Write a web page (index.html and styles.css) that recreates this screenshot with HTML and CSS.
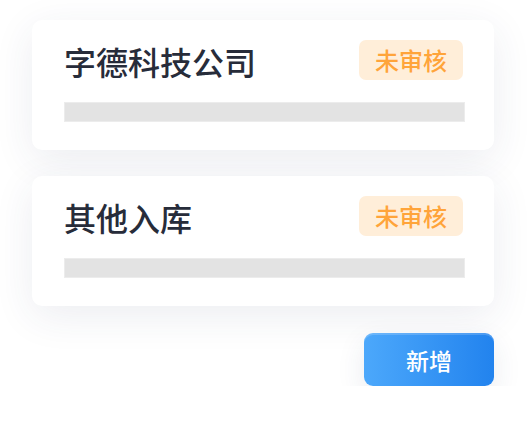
FILE: index.html
```html
<!DOCTYPE html>
<html lang="zh">
<head>
<meta charset="utf-8">
<title>列表</title>
<link rel="stylesheet" href="styles.css">
</head>
<body>
<div class="page">
  <div class="card">
    <div class="card-head">
      <div class="title">字德科技公司</div>
      <div class="badge">未审核</div>
    </div>
    <div class="bar"></div>
  </div>
  <div class="card">
    <div class="card-head">
      <div class="title">其他入库</div>
      <div class="badge">未审核</div>
    </div>
    <div class="bar"></div>
  </div>
  <div class="actions">
    <button class="btn">新增</button>
  </div>
</div>
</body>
</html>
```

FILE: styles.css
```css
html, body {
  margin: 0;
  padding: 0;
  background: #ffffff;
}
body {
  font-family: "Noto Sans CJK SC", "Noto Sans", sans-serif;
}
.page {
  padding: 20px 33px 0 32px;
  display: flex;
  flex-direction: column;
  gap: 26px;
}
.card {
  background: #ffffff;
  border-radius: 10px;
  box-shadow: 0 10px 40px rgba(40, 55, 95, 0.09);
  padding: 20px 30px 28px 32px;
  display: flex;
  flex-direction: column;
  gap: 22px;
}
.card-head {
  display: flex;
  align-items: center;
  justify-content: space-between;
  height: 40px;
}
.title {
  font-size: 32px;
  font-weight: 500;
  color: #272c3a;
  line-height: 40px;
  margin-top: 2px;
}
.badge {
  width: 104px;
  height: 40px;
  margin-right: 1px;
  border-radius: 7px;
  background: #ffeed9;
  color: #ffa43a;
  font-size: 24px;
  font-weight: 500;
  line-height: 40px;
  text-align: center;
}
.bar {
  height: 18px;
  background: #e3e3e3;
  border: 1px solid #ececec;
  margin-right: -1px;
}
.actions {
  display: flex;
  justify-content: flex-end;
  margin-top: 1px;
}
.btn {
  width: 130px;
  height: 53px;
  border: none;
  border-radius: 9px;
  background: linear-gradient(90deg, #4ca8fb 0%, #2283ee 100%);
  box-shadow: inset 0 2px 0 rgba(255, 255, 255, 0.18), 0 10px 28px rgba(40, 55, 95, 0.10);
  color: #ffffff;
  font-family: "Noto Sans CJK SC", "Noto Sans", sans-serif;
  font-size: 23px;
  font-weight: 500;
  padding: 0;
}
```
